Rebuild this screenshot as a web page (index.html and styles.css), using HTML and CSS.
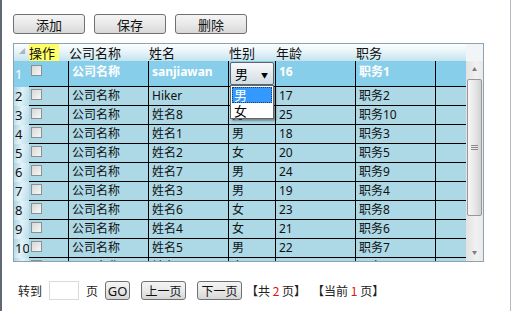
FILE: index.html
```html
<!DOCTYPE html>
<html lang="zh-CN">
<head>
    <meta charset="UTF-8">
    <title>数据表格</title>
    <link rel="stylesheet" href="styles.css">
</head>
<body>

    <div class="window">
        <!-- Toolbar -->
        <div class="toolbar">
            <button type="button" class="btn">添加</button>
            <button type="button" class="btn">保存</button>
            <button type="button" class="btn">删除</button>
        </div>

        <!-- Grid -->
        <div class="grid">
            <div class="grid-main">
                <div class="row head">
                    <div class="cell rh"><span class="corner">◢</span></div>
                    <div class="cell"><span class="hl">操作</span></div>
                    <div class="cell">公司名称</div>
                    <div class="cell">姓名</div>
                    <div class="cell">性别</div>
                    <div class="cell">年龄</div>
                    <div class="cell">职务</div>
                    <div class="cell"></div>
                </div>

                <div class="row current">
                    <div class="cell rh">1</div>
                    <div class="cell chk"><span class="box"></span></div>
                    <div class="cell">公司名称</div>
                    <div class="cell">sanjiawan</div>
                    <div class="cell edit">
                        <div class="combo"><span>男</span><span class="arrow">▼</span></div>
                        <div class="combo-list">
                            <div class="opt on">男</div>
                            <div class="opt">女</div>
                        </div>
                    </div>
                    <div class="cell">16</div>
                    <div class="cell">职务1</div>
                    <div class="cell"></div>
                </div>

                <div class="row"><div class="cell rh">2</div><div class="cell chk"><span class="box"></span></div><div class="cell">公司名称</div><div class="cell">Hiker</div><div class="cell"></div><div class="cell">17</div><div class="cell">职务2</div><div class="cell"></div></div>
                <div class="row"><div class="cell rh">3</div><div class="cell chk"><span class="box"></span></div><div class="cell">公司名称</div><div class="cell">姓名8</div><div class="cell">男</div><div class="cell">25</div><div class="cell">职务10</div><div class="cell"></div></div>
                <div class="row"><div class="cell rh">4</div><div class="cell chk"><span class="box"></span></div><div class="cell">公司名称</div><div class="cell">姓名1</div><div class="cell">男</div><div class="cell">18</div><div class="cell">职务3</div><div class="cell"></div></div>
                <div class="row"><div class="cell rh">5</div><div class="cell chk"><span class="box"></span></div><div class="cell">公司名称</div><div class="cell">姓名2</div><div class="cell">女</div><div class="cell">20</div><div class="cell">职务5</div><div class="cell"></div></div>
                <div class="row"><div class="cell rh">6</div><div class="cell chk"><span class="box"></span></div><div class="cell">公司名称</div><div class="cell">姓名7</div><div class="cell">男</div><div class="cell">24</div><div class="cell">职务9</div><div class="cell"></div></div>
                <div class="row"><div class="cell rh">7</div><div class="cell chk"><span class="box"></span></div><div class="cell">公司名称</div><div class="cell">姓名3</div><div class="cell">男</div><div class="cell">19</div><div class="cell">职务4</div><div class="cell"></div></div>
                <div class="row"><div class="cell rh">8</div><div class="cell chk"><span class="box"></span></div><div class="cell">公司名称</div><div class="cell">姓名6</div><div class="cell">女</div><div class="cell">23</div><div class="cell">职务8</div><div class="cell"></div></div>
                <div class="row"><div class="cell rh">9</div><div class="cell chk"><span class="box"></span></div><div class="cell">公司名称</div><div class="cell">姓名4</div><div class="cell">女</div><div class="cell">21</div><div class="cell">职务6</div><div class="cell"></div></div>
                <div class="row"><div class="cell rh">10</div><div class="cell chk"><span class="box"></span></div><div class="cell">公司名称</div><div class="cell">姓名5</div><div class="cell">男</div><div class="cell">22</div><div class="cell">职务7</div><div class="cell"></div></div>
                <div class="row"><div class="cell rh">11</div><div class="cell chk"><span class="box"></span></div><div class="cell">公司名称</div><div class="cell">姓名9</div><div class="cell">女</div><div class="cell">26</div><div class="cell">职务11</div><div class="cell"></div></div>
            </div>

            <!-- Vertical scrollbar -->
            <div class="vscroll">
                <div class="vs-corner"></div>
                <div class="vs-track">
                    <div class="vs-arrow">▲</div>
                    <div class="vs-thumb"><span class="grip"></span></div>
                    <div class="vs-arrow down">▼</div>
                </div>
            </div>
        </div>

        <!-- Pager -->
        <div class="pager">
            <span class="goto">转到</span>
            <input type="text" class="page-input">
            <span class="page-word">页</span>
            <button type="button" class="pbtn go">GO</button>
            <button type="button" class="pbtn prev">上一页</button>
            <button type="button" class="pbtn next">下一页</button>
            <span class="info">【共 <em>2</em> 页】</span>
            <span class="info cur">【当前 <em>1</em> 页】</span>
        </div>
    </div>

</body>
</html>
```

FILE: styles.css
```css
* {
    box-sizing: border-box;
}

body {
    margin: 0;
    background: #fff;
    font-family: "Noto Sans", "Noto Sans CJK SC", sans-serif;
    font-size: 12px;
    color: #111;
}

.window {
    width: 511px;
    height: 311px;
    border-left: 2px solid #5f6873;
    border-right: 1px solid #b4bac2;
    padding: 14px 0 0 11px;
    background: #fff;
}

/* toolbar */
.toolbar {
    display: flex;
    gap: 9px;
    height: 20px;
}

.btn {
    width: 72px;
    height: 20px;
    padding: 0;
    border: 1px solid #707070;
    border-radius: 3px;
    background: linear-gradient(#f4f4f4, #e9e9e9 50%, #d8d8d8);
    font-family: "Noto Sans CJK SC", sans-serif;
    font-size: 13px;
    line-height: 17px;
    color: #111;
}

/* grid */
.grid {
    display: flex;
    width: 471px;
    height: 219px;
    margin-top: 9px;
    border: 1px solid #8ea2b2;
    overflow: hidden;
}

.grid-main {
    width: 452px;
    height: 217px;
}

.row {
    display: grid;
    grid-template-columns: 15px 40px 80px 80px 47px 80px 80px 30px;
    height: 19px;
    background: #add8e6;
}

.cell {
    border-right: 1px solid #000;
    border-bottom: 1px solid #000;
    padding: 0 0 0 3px;
    line-height: 18px;
    white-space: nowrap;
    overflow: hidden;
}

.cell:last-child {
    border-right: none;
}

.cell.rh {
    border: none;
    padding: 0 0 0 1px;
    font-size: 13px;
    background: linear-gradient(100deg, #a6d3e4 0%, #e4f2f8 45%, #b9dde9 100%);
}

.row.head {
    height: 17px;
    background: linear-gradient(#fcfeff, #e8f4f9 45%, #c4e3ee);
}

.row.head .cell {
    border: none;
    padding: 0;
    font-family: "Noto Sans CJK SC", sans-serif;
    font-size: 13px;
    line-height: 17px;
}

.row.head .cell.rh {
    background: none;
    position: relative;
}

.corner {
    position: absolute;
    left: 5px;
    top: 4px;
    font-size: 6px;
    line-height: 6px;
    color: #a9b4bc;
}

.hl {
    display: inline-block;
    width: 30px;
    background: #ffff66;
}

.row.current {
    height: 26px;
    background: #87ceeb;
    color: #fff;
    font-weight: bold;
}

.row.current .cell {
    padding-top: 2px;
    line-height: 17px;
}

.row.current .cell.rh {
    background: #87ceeb;
    padding-top: 5px;
    font-weight: normal;
}

.cell.chk {
    padding: 2px 0 0 2px;
}

.row.current .cell.chk {
    padding-top: 4px;
}

.box {
    display: block;
    width: 11px;
    height: 11px;
    border: 1px solid #8e8f8f;
    background: linear-gradient(135deg, #d8d8d8, #f7f7f7);
}

/* editing combobox */
.cell.edit {
    position: relative;
    overflow: visible;
    padding: 1px 0 0 1px !important;
    z-index: 2;
}

.combo {
    display: flex;
    justify-content: space-between;
    width: 44px;
    height: 23px;
    padding: 2px 5px 0 4px;
    border: 1px solid #5b6770;
    border-radius: 2px;
    background: linear-gradient(#f7f9fb, #e4eaef 50%, #d3dce3);
    color: #000;
    font-weight: normal;
    font-family: "Noto Sans CJK SC", sans-serif;
    font-size: 13px;
    line-height: 18px;
}

.combo .arrow {
    font-size: 7px;
    line-height: 20px;
}

.combo-list {
    position: absolute;
    left: 1px;
    top: 24px;
    width: 44px;
    height: 34px;
    padding: 1px;
    border: 1px solid #646464;
    background: #fff;
    box-shadow: 2px 2px 2px rgba(0, 0, 0, 0.35);
    font-weight: normal;
    font-family: "Noto Sans CJK SC", sans-serif;
    font-size: 13px;
}

.opt {
    height: 16px;
    padding-left: 2px;
    line-height: 15px;
    color: #000;
}

.opt.on {
    background: #3399ff;
    color: #fff;
    outline: 1px dotted #1a3c66;
    outline-offset: -1px;
}

/* scrollbar */
.vscroll {
    width: 17px;
    display: flex;
    flex-direction: column;
}

.vs-corner {
    height: 17px;
    background: #f2f5f7;
}

.vs-track {
    flex: 1;
    display: flex;
    flex-direction: column;
    background: linear-gradient(to right, #e2e2e2, #f1f1f1 60%, #e9e9e9);
}

.vs-arrow {
    height: 17px;
    text-align: center;
    font-size: 5px;
    line-height: 17px;
    color: #7a7a7a;
}

.vs-arrow.down {
    margin-top: auto;
}

.vs-thumb {
    display: flex;
    align-items: center;
    justify-content: center;
    width: 15px;
    height: 137px;
    margin: 1px 0 0 1px;
    border: 1px solid #979797;
    border-radius: 2px;
    background: linear-gradient(to right, #f6f6f6, #e8e8e8 50%, #d2d2d2);
}

.grip {
    width: 7px;
    height: 5px;
    border-top: 1px solid #8a8a8a;
    border-bottom: 1px solid #8a8a8a;
    background: linear-gradient(transparent 1px, #8a8a8a 1px, #8a8a8a 2px, transparent 2px);
}

/* pager */
.pager {
    display: flex;
    align-items: center;
    height: 19px;
    margin-top: 19px;
    padding-left: 5px;
    font-family: "Noto Sans CJK SC", sans-serif;
    font-size: 12px;
    color: #222;
}

.page-input {
    width: 30px;
    height: 19px;
    margin: 0 7px 0 7px;
    border: 1px solid #dadada;
    padding: 0;
}

.pbtn {
    height: 19px;
    padding: 0;
    border: 1px solid #707070;
    border-radius: 3px;
    background: linear-gradient(#f4f4f4, #e9e9e9 50%, #d6d6d6);
    font-family: "Noto Sans CJK SC", sans-serif;
    font-size: 12px;
    line-height: 16px;
    color: #111;
}

.go {
    width: 25px;
    margin-left: 7px;
    font-family: "Noto Sans", sans-serif;
    font-size: 13px;
}

.prev,
.next {
    width: 45px;
    margin-left: 11px;
}

.info {
    margin-left: 4px;
}

.info.cur {
    margin-left: 6px;
}

.info em {
    font-style: normal;
    color: #e01010;
}
```
